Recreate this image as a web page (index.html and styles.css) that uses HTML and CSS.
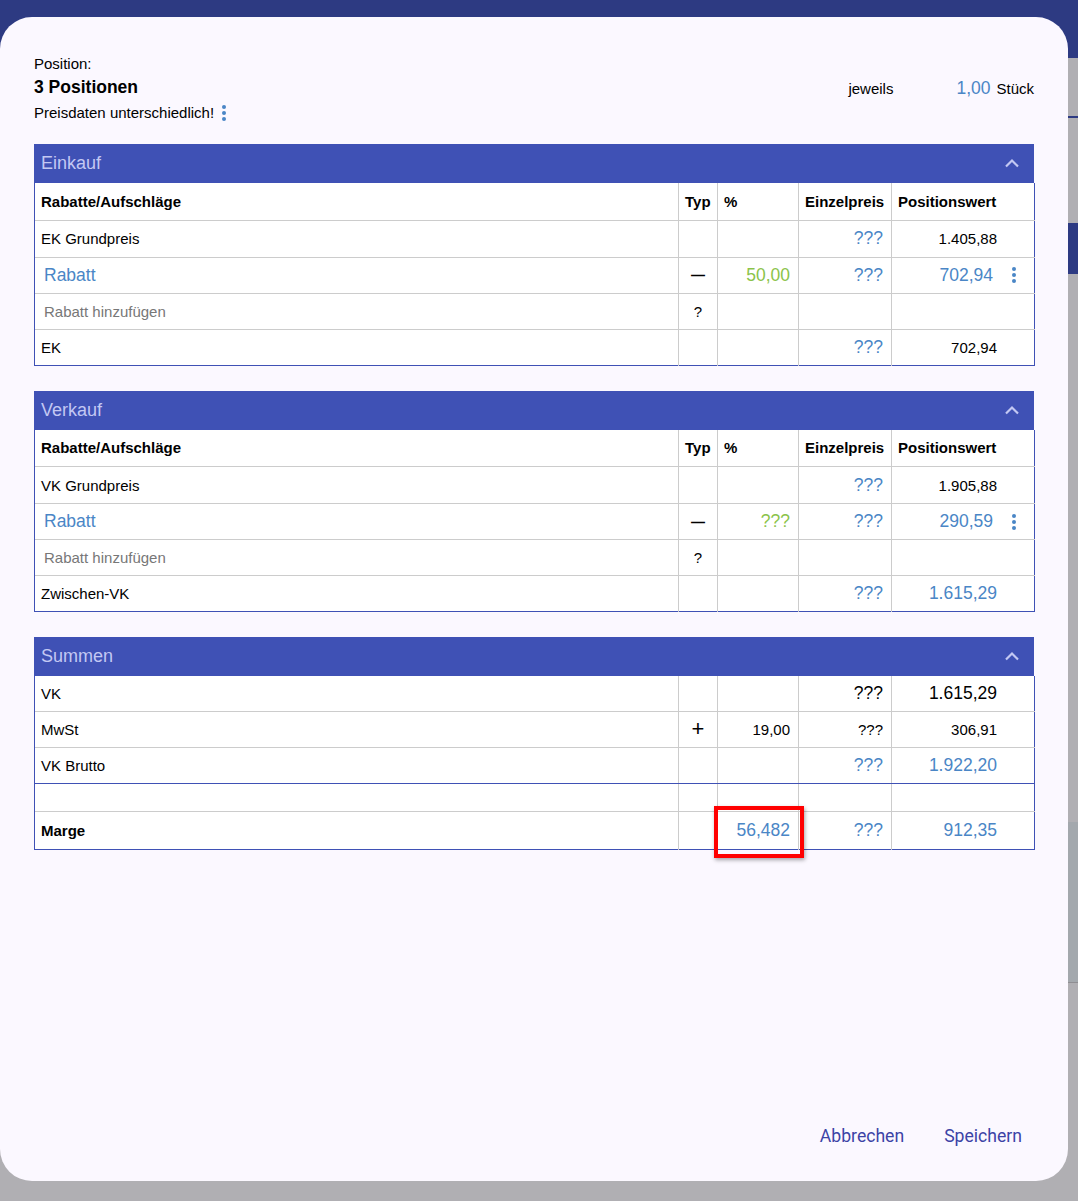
FILE: index.html
```html
<!DOCTYPE html>
<html lang="de">
<head>
<meta charset="utf-8">
<title>Positionen</title>
<link rel="stylesheet" href="styles.css">
</head>
<body>
<div class="backdrop">
  <div class="bg-bar"></div>
  <div class="bg-gray h58"></div>
  <div class="bg-line"></div>
  <div class="bg-gray h105"></div>
  <div class="bg-block"></div>
  <div class="bg-gray h548"></div>
  <div class="bg-blue-gray"></div>
  <div class="bg-thin"></div>
  <div class="bg-gray grow"></div>
</div>

<div class="dialog">
  <div class="info">
    <div class="info-left">
      <div class="lbl">Position:</div>
      <div class="title">3 Positionen</div>
      <div class="note">Preisdaten unterschiedlich! <span class="kebab small"><i></i><i></i><i></i></span></div>
    </div>
    <div class="info-right">
      <span class="jeweils">jeweils</span>
      <span class="qty">1,00</span>
      <span class="unit">Stück</span>
    </div>
  </div>

  <section class="panel">
    <div class="panel-head"><span>Einkauf</span><svg class="chev" width="16" height="10" viewBox="0 0 16 10"><path d="M2 8.5 L8 2.5 L14 8.5" fill="none" stroke="currentColor" stroke-width="2.2"/></svg></div>
    <table class="grid">
      <colgroup><col class="c1"><col class="c2"><col class="c3"><col class="c4"><col class="c5"></colgroup>
      <tr class="hdr"><th>Rabatte/Aufschläge</th><th>Typ</th><th>%</th><th>Einzelpreis</th><th>Positionswert</th></tr>
      <tr class="first"><td>EK Grundpreis</td><td></td><td></td><td class="num blue big">???</td><td class="pos">1.405,88</td></tr>
      <tr><td class="rabatt">Rabatt</td><td class="typ dash">—</td><td class="num green big">50,00</td><td class="num blue big">???</td><td class="pos"><div class="posflex"><span class="blue big">702,94</span><span class="kebab"><i></i><i></i><i></i></span></div></td></tr>
      <tr><td class="add">Rabatt hinzufügen</td><td class="typ q">?</td><td></td><td></td><td></td></tr>
      <tr><td>EK</td><td></td><td></td><td class="num blue big">???</td><td class="pos">702,94</td></tr>
    </table>
  </section>

  <section class="panel">
    <div class="panel-head"><span>Verkauf</span><svg class="chev" width="16" height="10" viewBox="0 0 16 10"><path d="M2 8.5 L8 2.5 L14 8.5" fill="none" stroke="currentColor" stroke-width="2.2"/></svg></div>
    <table class="grid">
      <colgroup><col class="c1"><col class="c2"><col class="c3"><col class="c4"><col class="c5"></colgroup>
      <tr class="hdr"><th>Rabatte/Aufschläge</th><th>Typ</th><th>%</th><th>Einzelpreis</th><th>Positionswert</th></tr>
      <tr class="first"><td>VK Grundpreis</td><td></td><td></td><td class="num blue big">???</td><td class="pos">1.905,88</td></tr>
      <tr><td class="rabatt">Rabatt</td><td class="typ dash">—</td><td class="num green big">???</td><td class="num blue big">???</td><td class="pos"><div class="posflex"><span class="blue big">290,59</span><span class="kebab"><i></i><i></i><i></i></span></div></td></tr>
      <tr><td class="add">Rabatt hinzufügen</td><td class="typ q">?</td><td></td><td></td><td></td></tr>
      <tr><td>Zwischen-VK</td><td></td><td></td><td class="num blue big">???</td><td class="pos blue big">1.615,29</td></tr>
    </table>
  </section>

  <section class="panel">
    <div class="panel-head"><span>Summen</span><svg class="chev" width="16" height="10" viewBox="0 0 16 10"><path d="M2 8.5 L8 2.5 L14 8.5" fill="none" stroke="currentColor" stroke-width="2.2"/></svg></div>
    <table class="grid">
      <colgroup><col class="c1"><col class="c2"><col class="c3"><col class="c4"><col class="c5"></colgroup>
      <tr class="vk"><td>VK</td><td></td><td></td><td class="num big">???</td><td class="pos big">1.615,29</td></tr>
      <tr><td>MwSt</td><td class="typ plus">+</td><td class="num">19,00</td><td class="num">???</td><td class="pos">306,91</td></tr>
      <tr class="sep"><td>VK Brutto</td><td></td><td></td><td class="num blue big">???</td><td class="pos blue big">1.922,20</td></tr>
      <tr class="empty"><td></td><td></td><td></td><td></td><td></td></tr>
      <tr class="marge"><td class="bold">Marge</td><td></td><td class="num blue big mark-cell">56,482<span class="mark"></span></td><td class="num blue big">???</td><td class="pos blue big">912,35</td></tr>
    </table>
  </section>

  <div class="spacer"></div>

  <div class="actions">
    <button class="btn">Abbrechen</button>
    <button class="btn">Speichern</button>
  </div>
</div>
</body>
</html>
```

FILE: styles.css
```css
* { box-sizing: border-box; }

html, body {
  margin: 0;
  padding: 0;
  height: 100%;
}

body {
  font-family: "Liberation Sans", Arial, sans-serif;
  color: #000;
  background: #b0afb3;
  overflow: hidden;
  position: relative;
}

/* background app (behind the dialog) */
.backdrop {
  display: flex;
  flex-direction: column;
  height: 1201px;
}
.bg-bar { height: 58px; background: #2d3a82; }
.bg-gray { background: #b0afb3; }
.h58 { height: 58px; }
.h105 { height: 105px; }
.h548 { height: 548px; }
.grow { flex: 1; }
.bg-line { height: 2px; background: #2d3a82; }
.bg-block { height: 51px; background: #2d3a82; }
.bg-blue-gray { height: 160px; background: #a3a8ad; }
.bg-thin { height: 1px; background: #8f8e92; }

/* dialog overlay */
.dialog {
  position: absolute;
  left: 0;
  top: 17px;
  width: 1068px;
  height: 1164px;
  background: #fbf8ff;
  border-radius: 32px;
  padding: 38px 34px 0 34px;
  display: flex;
  flex-direction: column;
}

.info {
  display: flex;
  justify-content: space-between;
  align-items: flex-start;
  margin-bottom: 23px;
}
.lbl { font-size: 15px; line-height: 17px; }
.title { font-size: 17.5px; font-weight: bold; line-height: 20px; margin-top: 5px; }
.note { font-size: 15px; line-height: 17px; margin-top: 7px; display: flex; align-items: center; gap: 8px; }

.info-right {
  display: flex;
  align-items: baseline;
  margin-top: 23px;
}
.jeweils { font-size: 15px; margin-right: 63px; }
.qty { font-size: 17.5px; color: #4a86c6; margin-right: 6px; }
.unit { font-size: 15px; }

.kebab {
  display: inline-flex;
  flex-direction: column;
  align-items: center;
  gap: 2px;
}
.kebab i {
  display: block;
  width: 4px;
  height: 4px;
  border-radius: 50%;
  background: #4a86c6;
}

/* panels */
.panel { margin-bottom: 25px; }
.panel-head {
  height: 39px;
  background: #3f51b5;
  color: #c3c8f3;
  font-size: 18px;
  display: flex;
  align-items: center;
  justify-content: space-between;
  padding: 0 14px 0 7px;
}
.chev { color: #c3c8f3; margin-top: -1px; }

.grid {
  width: 1000px;
  border-collapse: collapse;
  table-layout: fixed;
  background: #fff;
  border-left: 1px solid #3f51b5;
  border-right: 1px solid #3f51b5;
  border-bottom: 1px solid #3f51b5;
}
.c1 { width: 644px; }
.c2 { width: 39px; }
.c3 { width: 81px; }
.c4 { width: 93px; }
.c5 { width: 143px; }

.grid th, .grid td {
  height: 36px;
  padding: 0 6px;
  font-size: 15px;
  font-weight: normal;
  text-align: left;
  border-top: 1px solid #cccccc;
  border-left: 1px solid #cccccc;
  vertical-align: middle;
  white-space: nowrap;
}
.grid tr:first-child th, .grid tr:first-child td { border-top: none; }
.grid tr.hdr th { height: 37px; }
.grid tr.first td { height: 37px; }
.grid tr.vk td { height: 35px; }
.grid th:first-child, .grid td:first-child { border-left: 1px solid #3f51b5; }
.grid th { font-weight: bold; }
.grid td.bold { font-weight: bold; }

.grid .num { text-align: right; padding-right: 8px; }
.grid .pos { text-align: right; padding-right: 37px; }
.posflex {
  display: flex;
  align-items: center;
  justify-content: flex-end;
  margin-right: -37px;
}
.posflex .kebab { width: 41px; }

.blue { color: #4a86c6; }
.green { color: #8bc34a; }
.grid .big, .big { font-size: 17.5px; }

.grid .rabatt { color: #4a86c6; font-size: 17.5px; padding-left: 9px; }
.grid .add { color: #777; padding-left: 9px; }
.grid .typ { text-align: center; padding: 0; font-size: 15px; }
.grid .typ.dash { font-size: 14px; font-weight: bold; }
.grid .typ.plus { font-size: 22px; }

.grid tr.sep td { border-bottom: 1px solid #3f51b5; }
.grid tr.empty td { height: 28px; border-top: none; }
.grid tr.marge td { height: 38px; }

.mark-cell { position: relative; }
.mark {
  position: absolute;
  left: -4px;
  top: -6px;
  right: -6px;
  bottom: -9px;
  border: 4px solid #ff0000;
  box-shadow: 1px 2px 4px rgba(0,0,0,0.35);
}

.spacer { flex: 1; }

.actions {
  display: flex;
  justify-content: flex-end;
  gap: 16px;
  padding-right: 0;
  margin-bottom: 27px;
}
.btn {
  font-family: Roboto, "Liberation Sans", sans-serif;
  font-size: 17.6px;
  color: #3c43a6;
  background: none;
  border: none;
  padding: 8px 12px;
  cursor: pointer;
}
```
